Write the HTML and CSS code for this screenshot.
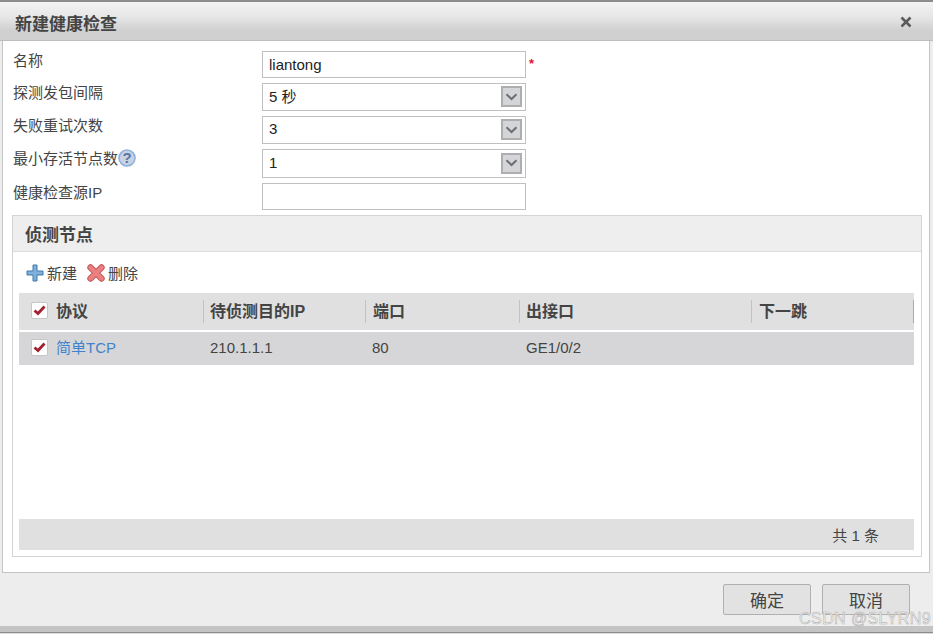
FILE: index.html
```html
<!DOCTYPE html>
<html lang="zh">
<head>
<meta charset="utf-8">
<title>新建健康检查</title>
<link rel="stylesheet" href="styles.css">
</head>
<body>
<div class="dialog">
  <header class="titlebar">
    <span class="title">新建健康检查</span>
    <svg class="close" width="12" height="12" viewBox="0 0 12 12"><path d="M1.5 1.5l9 9M10.5 1.5l-9 9" stroke="#5c5c5c" stroke-width="2.6" fill="none"/></svg>
  </header>
  <main class="body">
    <div class="form">
      <div class="row r1"><label>名称</label><div class="field"><span class="val v-name">liantong</span></div><span class="req">*</span></div>
      <div class="row r2"><label>探测发包间隔</label><div class="field"><span class="val">5 秒</span><span class="arrow"><svg width="13" height="8" viewBox="0 0 13 8"><path d="M1.5 1.2L6.5 6l5-4.8" stroke="#6e6e6e" stroke-width="2" fill="none"/></svg></span></div></div>
      <div class="row r3"><label>失败重试次数</label><div class="field"><span class="val">3</span><span class="arrow"><svg width="13" height="8" viewBox="0 0 13 8"><path d="M1.5 1.2L6.5 6l5-4.8" stroke="#6e6e6e" stroke-width="2" fill="none"/></svg></span></div></div>
      <div class="row r4"><label>最小存活节点数<svg class="help" width="18" height="18" viewBox="0 0 18 18"><circle cx="9" cy="9" r="8" fill="#c9d2e0" stroke="#8fb0e0" stroke-width="1.6"/><text x="9" y="14" text-anchor="middle" class="help-q">?</text></svg></label><div class="field"><span class="val">1</span><span class="arrow"><svg width="13" height="8" viewBox="0 0 13 8"><path d="M1.5 1.2L6.5 6l5-4.8" stroke="#6e6e6e" stroke-width="2" fill="none"/></svg></span></div></div>
      <div class="row r5"><label>健康检查源IP</label><div class="field"></div></div>
    </div>
    <section class="panel">
      <h2 class="panel-head">侦测节点</h2>
      <div class="toolbar">
        <span class="tool">
          <svg width="18" height="18" viewBox="0 0 18 18"><path d="M7 1h4v6h6v4h-6v6H7v-6H1V7h6z" fill="#7fb0dc" stroke="#3f78ad" stroke-width="1"/></svg>新建
        </span>
        <span class="tool tool-del">
          <svg width="18" height="18" viewBox="0 0 18 18"><path d="M3.5 3.5l11 11M14.5 3.5l-11 11" stroke="#c65a5a" stroke-width="6.4" stroke-linecap="round" fill="none"/><path d="M3.5 3.5l11 11M14.5 3.5l-11 11" stroke="#ea8080" stroke-width="4.4" stroke-linecap="round" fill="none"/></svg>删除
        </span>
      </div>
      <div class="table">
        <div class="thead">
          <div class="cell c1"><span class="check"><svg width="13" height="11" viewBox="0 0 13 11"><path d="M1.5 5.5l3.5 3 6.5-7" stroke="#a3202c" stroke-width="2.8" fill="none"/></svg></span>协议</div>
          <div class="cell c2">待侦测目的IP</div>
          <div class="cell c3">端口</div>
          <div class="cell c4">出接口</div>
          <div class="cell c5">下一跳</div>
        </div>
        <div class="trow">
          <div class="cell c1"><span class="check"><svg width="13" height="11" viewBox="0 0 13 11"><path d="M1.5 5.5l3.5 3 6.5-7" stroke="#a3202c" stroke-width="2.8" fill="none"/></svg></span><a class="link">简单TCP</a></div>
          <div class="cell c2">210.1.1.1</div>
          <div class="cell c3">80</div>
          <div class="cell c4">GE1/0/2</div>
          <div class="cell c5"></div>
        </div>
        <div class="spacer"></div>
        <div class="tfoot">共 1 条</div>
      </div>
    </section>
  </main>
  <footer class="footer">
    <button class="btn">确定</button>
    <button class="btn">取消</button>
  </footer>
  <div class="bottom-strip"></div>
</div>
<span class="watermark">CSDN @SLYRN9</span>
</body>
</html>
```
FILE: styles.css
```css
* { box-sizing: border-box; }
html, body { margin: 0; padding: 0; }
body {
  width: 933px;
  height: 634px;
  overflow: hidden;
  position: relative;
  background: #fff;
  font-family: "Liberation Sans", "Noto Sans CJK SC", sans-serif;
  font-size: 15px;
  color: #333;
}
.dialog {
  display: flex;
  flex-direction: column;
  height: 634px;
  background: #ededed;
  border-top: 2px solid #8c8c8c;
}
.titlebar {
  height: 39px;
  flex: none;
  display: flex;
  align-items: center;
  justify-content: space-between;
  padding: 2px 21px 0 15px;
  background: linear-gradient(#f3f3f3, #e6e6e6 40%, #d0d0d0 75%, #cfcfcf);
  border-bottom: 1px solid #bdbdbd;
}
.title { font-size: 17px; font-weight: bold; color: #444; }
.body {
  flex: none;
  height: 532px;
  margin: 0 3px 0 2px;
  padding: 0 7px 0 9px;
  background: #fff;
  border: 1px solid #c4c4c4;
  border-top: 0;
}
.form { padding-top: 10px; height: 174px; }
.row { display: flex; align-items: flex-start; }
.r1 { height: 32px; }
.r2 { height: 33px; }
.r3 { height: 33px; }
.r4 { height: 34px; }
.r5 { height: 27px; }
.row label {
  width: 250px;
  flex: none;
  display: flex;
  align-items: center;
  height: 16px;
  padding-left: 1px;
  color: #444;
}
.help { margin-left: 0; flex: none; position: relative; top: 1px; }
.help-q { font-size: 15px; font-weight: bold; fill: #5577a8; }
.field {
  width: 264px;
  height: 27px;
  flex: none;
  display: flex;
  align-items: center;
  justify-content: space-between;
  padding: 0 3px 1px 6px;
  border: 1px solid #c0c0c0;
  background: #fff;
  color: #222;
}
.r2 .field, .r3 .field { height: 28px; }
.r4 .field { height: 29px; }
.r2 .val, .r3 .val, .r4 .val { margin-bottom: 2px; }
.arrow {
  width: 21px;
  height: 21px;
  display: flex;
  align-items: center;
  justify-content: center;
  background: #d3d5d8;
  border: 2px solid #aeaeae;
}
.req { color: #e8112d; font-size: 13px; line-height: 20px; margin: 3px 0 0 3px; font-weight: bold; }
.panel {
  height: 342px;
  border: 1px solid #d4d4d4;
  display: flex;
  flex-direction: column;
}
.panel-head {
  margin: 0;
  height: 36px;
  flex: none;
  display: flex;
  align-items: center;
  padding-left: 12px;
  font-size: 17px;
  font-weight: bold;
  color: #444;
  background: #eeeeee;
  border-bottom: 1px solid #dcdcdc;
}
.toolbar {
  height: 41px;
  flex: none;
  display: flex;
  align-items: center;
  gap: 10px;
  padding-left: 13px;
}
.tool { display: flex; align-items: center; gap: 3px; color: #444; }
.tool-del { gap: 3px; }
.table {
  flex: 1;
  margin: 0 7px 6px 6px;
  display: flex;
  flex-direction: column;
}
.thead, .trow { display: flex; flex: none; align-items: center; }
.thead {
  height: 37px;
  background: #e0e0e0;
  font-size: 16px;
  font-weight: bold;
  color: #444;
}
.trow {
  height: 33px;
  margin-top: 2px;
  background: #d6d6d8;
  color: #444;
}
.cell {
  display: flex;
  align-items: center;
  height: 23px;
  padding: 0 0 3px 6px;
  flex: none;
}
.thead .cell { padding-bottom: 4px; }
.thead .cell + .cell { border-left: 1px solid #c2c2c2; }
.thead .c3, .thead .c5 { padding-left: 7px; }
.thead .c5 { border-right: 1px solid #aaa; }
.thead .check { margin-top: 2px; }
.trow .cell { border-left: 1px solid transparent; }
.trow .c1 { border-left: 0; }
.c1 { width: 184px; padding-left: 12px; }
.c2 { width: 162px; }
.c3 { width: 154px; }
.c4 { width: 232px; }
.c5 { width: 163px; }
.check {
  width: 17px;
  height: 17px;
  margin-right: 8px;
  display: flex;
  align-items: center;
  justify-content: center;
  background: #fff;
  border: 1px solid #c6c6c6;
  border-radius: 2px;
}
.link { color: #3f83cc; margin-bottom: 2px; }
.spacer { flex: 1; }
.tfoot {
  height: 31px;
  flex: none;
  display: flex;
  align-items: center;
  justify-content: flex-end;
  padding-right: 35px;
  background: #e0e0e0;
  color: #444;
}
.footer {
  flex: 1;
  display: flex;
  justify-content: flex-end;
  gap: 11px;
  padding: 11px 23px 0 0;
}
.btn {
  width: 88px;
  height: 31px;
  background: #e2e2e2;
  border: 1px solid #b0b0b0;
  border-radius: 2px;
  font-family: inherit;
  font-size: 17px;
  color: #444;
  padding: 0;
}
.bottom-strip {
  height: 8px;
  flex: none;
  background: #c4c4c4;
  box-shadow: inset 0 -1px #8c8c8c;
  border-bottom: 1px solid #dcdcdc;
}
.watermark {
  position: absolute;
  right: 2px;
  bottom: 6px;
  font-size: 16px;
  color: #f4f4f4;
  -webkit-text-stroke: 0.5px #aaa;
  letter-spacing: 0.4px;
}
```
